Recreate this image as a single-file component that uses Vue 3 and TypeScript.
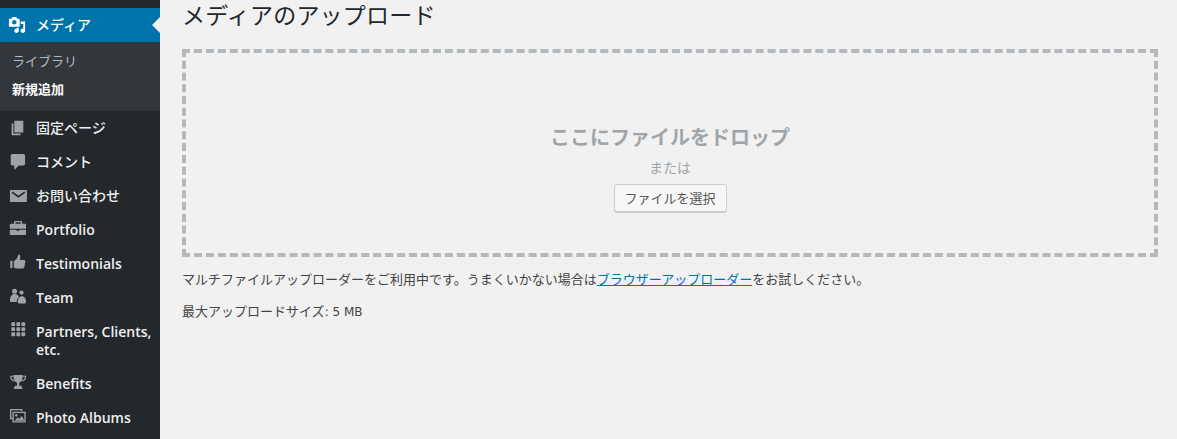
<template>
  <div class="page">
    <aside class="sidebar">
      <nav class="menu">
        <a class="item active jp">
          <svg class="icon" viewBox="0 0 20 20"><path d="M13 11V4c0-.55-.45-1-1-1h-1.670L9 1H5L3.670 3H2c-.55 0-1 .45-1 1v7c0 .55.45 1 1 1h10c.55 0 1-.45 1-1zM7 4.500c1.380 0 2.500 1.120 2.500 2.500S8.380 9.500 7 9.500 4.500 8.380 4.500 7 5.620 4.500 7 4.500zM14 6h5v10.500c0 1.380-1.120 2.500-2.500 2.500S14 17.880 14 16.500s1.120-2.500 2.500-2.500c.17 0 .34.020.5.050V9h-3V6zm-4 8.050V13h2v3.500c0 1.380-1.120 2.500-2.500 2.500S7 17.880 7 16.500 8.120 14 9.500 14c.17 0 .34.020.5.050z" /></svg>
          <span>メディア</span>
        </a>
        <div class="submenu">
          <a class="sub">ライブラリ</a>
          <a class="sub current">新規追加</a>
        </div>
        <a v-for="m in items" :key="m.label" class="item" :class="{ jp: m.jp }">
          <svg class="icon" viewBox="0 0 20 20" v-html="m.icon"></svg>
          <span>{{ m.label }}</span>
        </a>
      </nav>
    </aside>
    <main class="content">
      <h1>メディアのアップロード</h1>
      <div class="dropzone">
        <p class="drop-title">ここにファイルをドロップ</p>
        <p class="drop-or">または</p>
        <button class="select-btn" type="button">ファイルを選択</button>
      </div>
      <p class="note">マルチファイルアップローダーをご利用中です。うまくいかない場合は<a class="link">ブラウザーアップローダー</a>をお試しください。</p>
      <p class="note">最大アップロードサイズ<span class="num">: 5 MB</span></p>
    </main>
  </div>
</template>

<script setup lang="ts">
interface MenuItem {
  label: string;
  icon: string;
  jp?: boolean;
}

const items: MenuItem[] = [
  {
    label: '固定ページ',
    jp: true,
    icon: '<path transform="translate(1 0)" d="M6 15V2h10v13H6zm-1 1h8v2H3V5h2v11z"/>',
  },
  {
    label: 'コメント',
    jp: true,
    icon: '<path d="M5 1h12c1.100 0 2 .9 2 2v9c0 1.100-.9 2-2 2h-5l-5 5v-5H5c-1.100 0-2-.9-2-2V3c0-1.100.9-2 2-2z"/>',
  },
  {
    label: 'お問い合わせ',
    jp: true,
    icon: '<rect x="2.200" y="3.300" width="18.800" height="13.400" rx="1"/><path d="M4.500 5.600l7.100 5.200 7.100-5.200" fill="none" stroke="#23282d" stroke-width="1.800"/>',
  },
  {
    label: 'Portfolio',
    icon: '<path fill-rule="evenodd" d="M8 0h6.400c.8 0 1.300.5 1.300 1.300V3h3.500c.5 0 .8.300.8.800v4.700H2V3.800c0-.5.300-.8.800-.8h3.900V1.300C6.700.5 7.200 0 8 0zm.300 1.500V3h5.800V1.500z"/><path d="M2 9.700h7.800v1.500h2.400V9.700H20v5c0 .5-.3.800-.8.800H2.800c-.5 0-.8-.3-.8-.8z"/>',
  },
  {
    label: 'Testimonials',
    icon: '<path transform="translate(1 -2.500)" d="M1.500 9H4v8H1.500z"/><path transform="translate(1 -2.500)" d="M5.500 9.500 9 6.500 10.500 2c1.700 0 2.500 1.300 2.200 3L12 8h4.500c1.300 0 2 1 1.800 2l-1 5.500c-.3 1.200-1 2-2.300 2H9c-1.500 0-2.500-.8-3.500-1.200z"/>',
  },
  {
    label: 'Team',
    icon: '<circle cx="7.300" cy="2.600" r="2.800"/><circle cx="15" cy="4" r="2.300"/><path d="M2.200 13c0-5 2-7.500 5-7.500s4.500 1.500 5 3.500c-1.500 1-2.500 3-2.500 5.500H3.500c-.8 0-1.300-.5-1.300-1.500z"/><path d="M10.800 14.500c0-4 1.700-6.500 4.700-6.500s4.500 2.500 4.500 6.500c0 1-.5 1.500-1.300 1.500h-6.600c-.8 0-1.300-.5-1.300-1.500z"/>',
  },
  {
    label: 'Partners, Clients, etc.',
    icon: '<rect x="3.700" y="-.8" width="4.200" height="4.200" rx=".7"/><rect x="9.300" y="-.8" width="4.200" height="4.200" rx=".7"/><rect x="14.900" y="-.8" width="4.200" height="4.200" rx=".7"/><rect x="3.700" y="4.800" width="4.200" height="4.200" rx=".7"/><rect x="9.300" y="4.800" width="4.200" height="4.200" rx=".7"/><rect x="14.900" y="4.800" width="4.200" height="4.200" rx=".7"/><rect x="3.700" y="10.400" width="4.200" height="4.200" rx=".7"/><rect x="9.300" y="10.400" width="4.200" height="4.200" rx=".7"/><rect x="14.900" y="10.400" width="4.200" height="4.200" rx=".7"/>',
  },
  {
    label: 'Benefits',
    icon: '<path d="M6 0h10.500c0 5-1.500 7.500-4 8.500V12H15v1.500h1V15.500H6.500V13.500h1V12H10V8.500C7.500 7.500 6 5 6 0z"/><path d="M6 1.400H3c0 3.200 1.500 4.800 4.300 5.200M16.500 1.400h3c0 3.200-1.500 4.800-4.300 5.200" fill="none" stroke="#9ea3a8" stroke-width="1.300"/>',
  },
  {
    label: 'Photo Albums',
    icon: '<path d="M2.200 0H16v2.500h-1.500V1.500H3.700v8.300H5v1.500H2.200z"/><path fill-rule="evenodd" d="M5 3h14.700v12H5zm1.500 1.500v9h11.700v-9z"/><path d="M7.500 13l3.300-3.800 1.700 1.900 2.500-3.300 2.500 3.300V13z"/><circle cx="9.200" cy="7" r="1.400"/>',
  },
];
</script>

<style>
html,
body {
  margin: 0;
  height: 439px;
  overflow: hidden;
  background: #f1f1f1;
}
</style>

<style scoped>
.page {
  display: flex;
  height: 439px;
  overflow: hidden;
  font-family: "Open Sans", "Noto Sans CJK JP", sans-serif;
  font-size: 13px;
  color: #444;
}

.sidebar {
  width: 160px;
  flex: none;
  background: #23282d;
  padding-top: 8px;
}

.menu {
  display: flex;
  flex-direction: column;
}

.item {
  display: flex;
  align-items: flex-start;
  color: #eee;
  font-size: 14px;
  font-weight: 600;
  line-height: 18px;
  padding: 8px;
}

.item.jp {
  font-weight: 500;
}

.item span {
  flex: 1;
  min-width: 0;
  margin-left: 10px;
}

.icon {
  width: 18px;
  height: 18px;
  flex: none;
  fill: #9ea3a8;
  overflow: visible;
}

.item.active {
  position: relative;
  background: #0073aa;
  color: #fff;
}

.item.active .icon {
  fill: #fff;
}

.item.active::after {
  content: "";
  position: absolute;
  right: 0;
  top: 9px;
  border: 8px solid transparent;
  border-right-color: #f1f1f1;
}

.submenu {
  display: flex;
  flex-direction: column;
  background: #32373c;
  padding: 5px 0 8px;
}

.sub {
  font-size: 13px;
  line-height: 18px;
  padding: 5px 12px;
  color: rgba(240, 245, 250, 0.7);
}

.sub.current {
  color: #fff;
  font-weight: 600;
}

.content {
  flex: 1;
  min-width: 0;
  padding: 0 19px 0 22px;
}

h1 {
  margin: 0;
  font-size: 23px;
  font-weight: 400;
  line-height: 30px;
  letter-spacing: 0.2px;
  color: #23282d;
}

.dropzone {
  box-sizing: border-box;
  height: 208px;
  margin-top: 19px;
  border: 4px dashed #b4b9be;
  display: flex;
  flex-direction: column;
  align-items: center;
  padding-top: 71px;
}

.drop-title {
  margin: 0;
  font-size: 20px;
  font-weight: 600;
  line-height: 28px;
  color: #a0a5aa;
}

.drop-or {
  margin: 6px 0 0;
  font-size: 14px;
  line-height: 20px;
  color: #a0a5aa;
}

.select-btn {
  box-sizing: border-box;
  height: 28px;
  width: 113px;
  margin-top: 6px;
  padding: 0 10px 2px;
  font: inherit;
  font-size: 13px;
  color: #555;
  background: #f7f7f7;
  border: 1px solid #ccc;
  border-radius: 3px;
  box-shadow: 0 1px 0 #ccc;
}

.note {
  margin: 13px 0 0;
  font-size: 13px;
  line-height: 19px;
}

.num {
  font-family: "DejaVu Sans", sans-serif;
  font-size: 12px;
}

.link {
  color: #0073aa;
  text-decoration: underline;
}
</style>
